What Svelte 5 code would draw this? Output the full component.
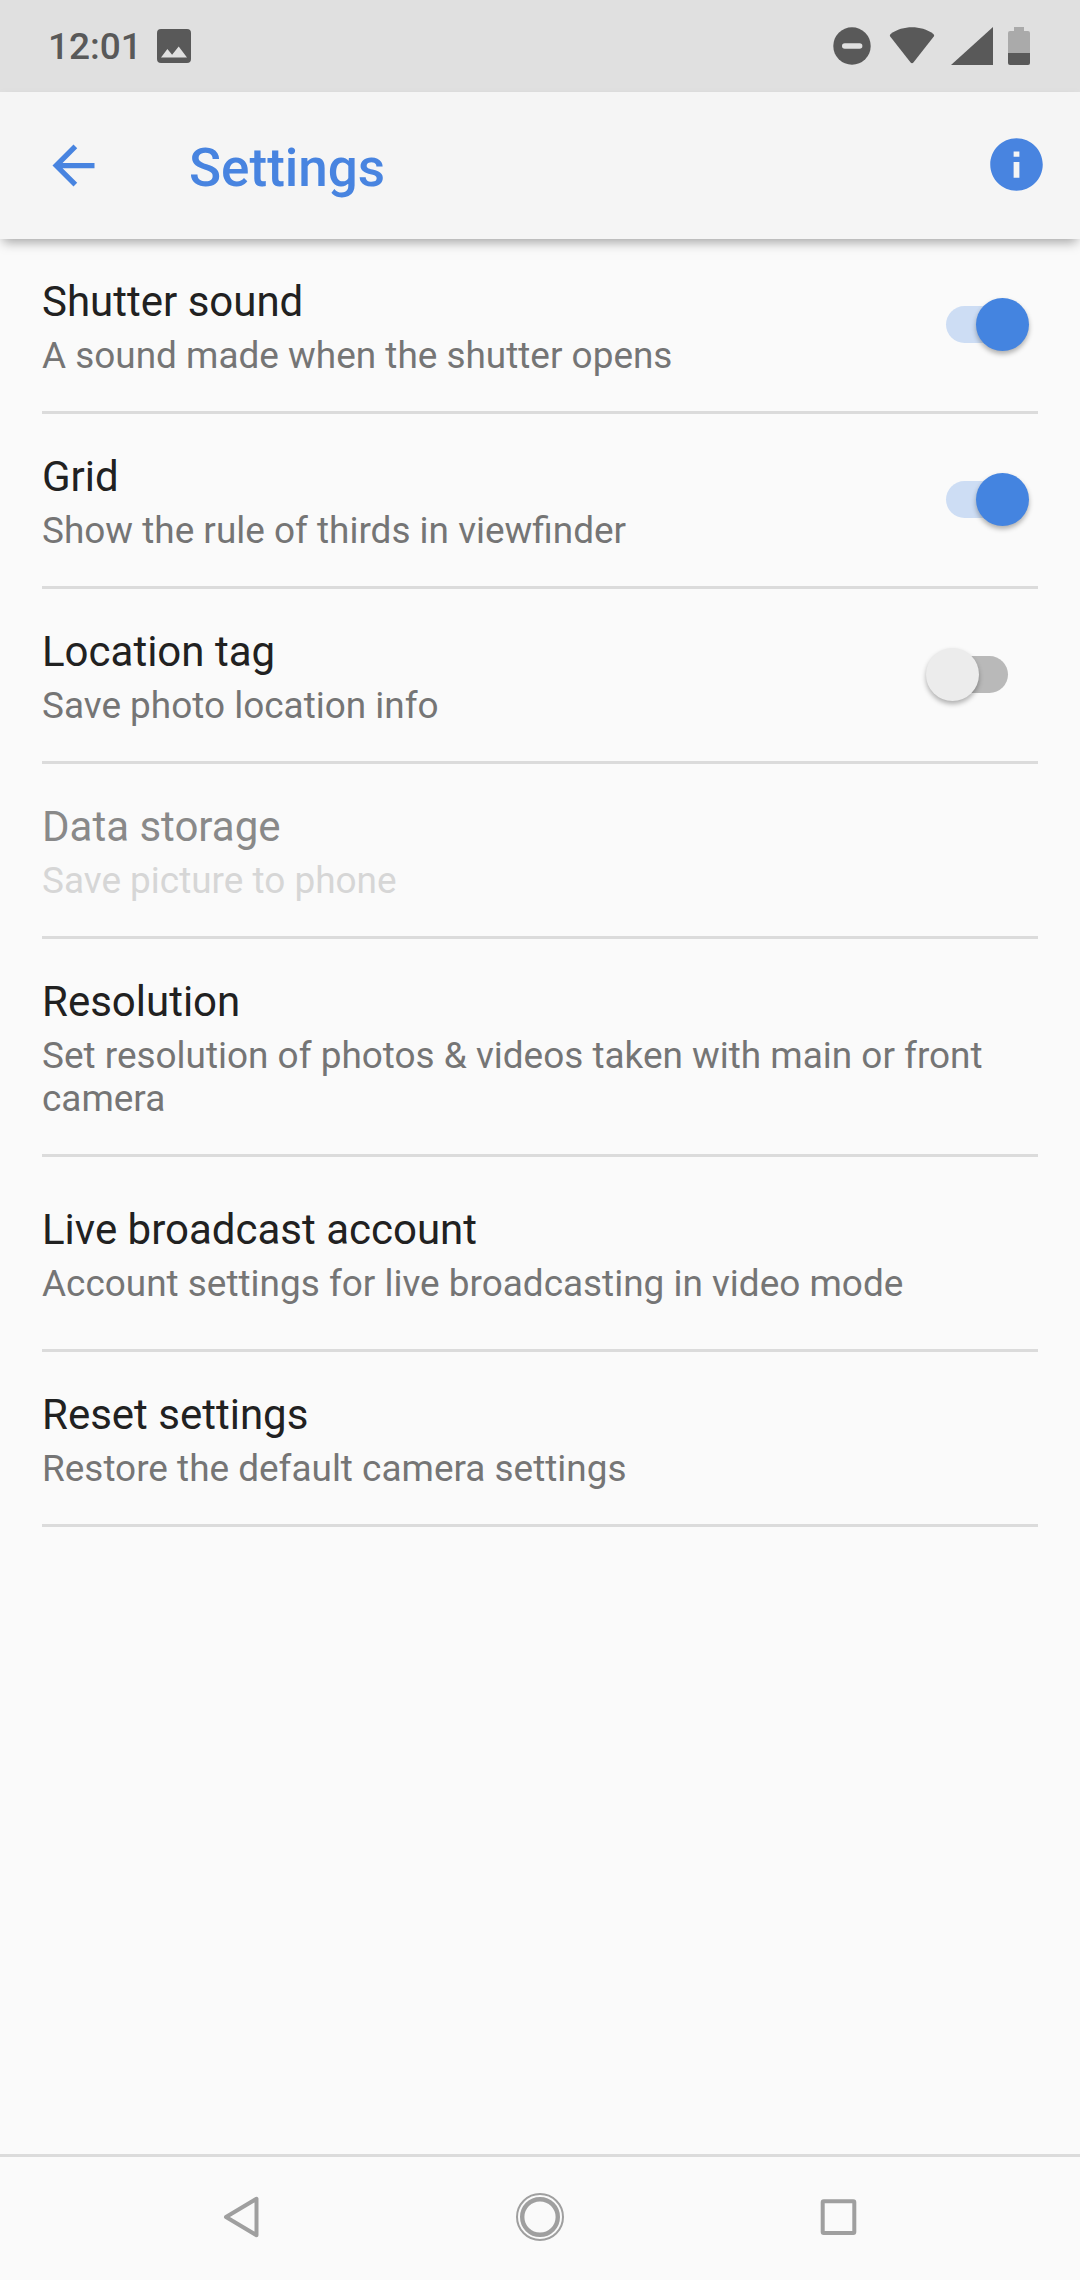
<script lang="ts">
  type Row = {
    id: string;
    title: string;
    summary: string;
    checked?: boolean;
    disabled?: boolean;
    tall?: boolean;
  };

  let rows = $state<Row[]>([
    { id: "shutter", title: "Shutter sound", summary: "A sound made when the shutter opens", checked: true },
    { id: "grid", title: "Grid", summary: "Show the rule of thirds in viewfinder", checked: true },
    { id: "location", title: "Location tag", summary: "Save photo location info", checked: false },
    { id: "storage", title: "Data storage", summary: "Save picture to phone", disabled: true },
    { id: "resolution", title: "Resolution", summary: "Set resolution of photos & videos taken with main or front camera" },
    { id: "live", title: "Live broadcast account", summary: "Account settings for live broadcasting in video mode", tall: true },
    { id: "reset", title: "Reset settings", summary: "Restore the default camera settings" },
  ]);
</script>

<div class="screen">
  <div class="status-bar">
    <span class="clock">12:01</span>
    <svg class="photo" width="34" height="34" viewBox="0 0 34 34">
      <path
        fill-rule="evenodd"
        d="M4 0h26a4 4 0 0 1 4 4v26a4 4 0 0 1-4 4H4a4 4 0 0 1-4-4V4a4 4 0 0 1 4-4zM4 28.5h26L21.7 17.4l-6.6 8.4-4.7-5.7z"
      />
    </svg>
    <svg class="dnd" width="38" height="38" viewBox="0 0 38 38">
      <circle cx="19" cy="19" r="18.7" />
      <rect class="cut" x="9" y="16.2" width="20.4" height="5.6" rx="2.8" />
    </svg>
    <svg class="wifi" width="46" height="38" viewBox="0 0 46 38">
      <path d="M1.2 9.4Q0.2 7.9 1.6 6.9C8 2.4 15.5 0.3 23 0.3S38 2.4 44.4 6.9Q45.8 7.9 44.8 9.4L24.4 35.5Q23 37 21.6 35.5z" />
    </svg>
    <svg class="signal" width="42" height="38" viewBox="0 0 42 38">
      <path d="M0 38h42V0z" />
    </svg>
    <svg class="battery" width="22" height="38" viewBox="0 0 22 38">
      <path class="empty" d="M6 0h10v4h4a2 2 0 0 1 2 2v20H0V6a2 2 0 0 1 2-2h4z" />
      <path d="M0 26h22v10a2 2 0 0 1-2 2H2a2 2 0 0 1-2-2z" />
    </svg>
  </div>

  <header class="app-bar">
    <button class="icon-btn" aria-label="Back">
      <svg width="63" height="63" viewBox="0 0 24 24">
        <path d="M20 11H7.83l5.59-5.59L12 4l-8 8 8 8 1.41-1.41L7.83 13H20v-2z" />
      </svg>
    </button>
    <h1>Settings</h1>
    <button class="icon-btn info" aria-label="Info">
      <svg width="63" height="63" viewBox="0 0 24 24">
        <path
          d="M12 2C6.48 2 2 6.48 2 12s4.48 10 10 10 10-4.48 10-10S17.52 2 12 2zm1.1 15h-2.2v-6h2.2v6zm0-8h-2.2V7h2.2v2z"
        />
      </svg>
    </button>
  </header>

  <main>
    {#each rows as row (row.id)}
      <div class="row" class:tall={row.tall} class:disabled={row.disabled}>
        <div class="text">
          <div class="title">{row.title}</div>
          <div class="summary">{row.summary}</div>
        </div>
        {#if row.checked !== undefined}
          <button
            class="switch"
            class:on={row.checked}
            role="switch"
            aria-checked={row.checked}
            aria-label={row.title}
            onclick={() => (row.checked = !row.checked)}
          >
            <span class="thumb"></span>
          </button>
        {/if}
      </div>
    {/each}
  </main>

  <nav>
    <button aria-label="Back">
      <svg width="50" height="50" viewBox="0 0 50 50">
        <path d="M41.5 6.8v36.4L11 25z" stroke-width="4" stroke-linejoin="round" />
      </svg>
    </button>
    <button aria-label="Home">
      <svg width="50" height="50" viewBox="0 0 50 50">
        <circle cx="25" cy="25" r="23" stroke-width="2" />
        <circle cx="25" cy="25" r="17.8" stroke-width="4.4" />
      </svg>
    </button>
    <button aria-label="Recents">
      <svg width="50" height="50" viewBox="0 0 50 50">
        <rect x="7.7" y="9.3" width="31.6" height="31.6" rx="1" stroke-width="4" />
      </svg>
    </button>
  </nav>
</div>

<style>
  :global(body) {
    margin: 0;
    background: #fafafa;
  }
  .screen {
    display: flex;
    flex-direction: column;
    width: 1080px;
    height: 2280px;
    overflow: hidden;
    background: #fafafa;
    font-family: Roboto, sans-serif;
  }
  button {
    padding: 0;
    border: 0;
    background: none;
  }
  svg {
    display: block;
  }

  .status-bar {
    display: flex;
    flex: none;
    align-items: center;
    box-sizing: border-box;
    height: 92px;
    padding: 0 50px 0 48px;
    background: #e0e0e0;
    color: #595959;
    fill: #595959;
  }
  .clock {
    width: 108.5px;
    padding-top: 2px;
    font-size: 37px;
    font-weight: 500;
    line-height: 44px;
  }
  .photo {
    margin: 0 auto 1px 0;
  }
  .cut {
    fill: #e0e0e0;
  }
  .dnd {
    margin-bottom: 1px;
  }
  .wifi {
    margin-left: 18.5px;
  }
  .signal {
    margin: 0 0 1px 16px;
  }
  .battery {
    margin-left: 15px;
  }
  .empty {
    fill: #aaa;
  }

  .app-bar {
    display: flex;
    flex: none;
    align-items: center;
    box-sizing: border-box;
    height: 147px;
    padding: 0 32px 0 42px;
    background: #f5f5f5;
    color: #4884e0;
    fill: #4884e0;
    box-shadow: 0 6px 11px -3px rgba(0, 0, 0, 0.36);
  }
  .info {
    padding-bottom: 2px;
  }
  h1 {
    flex: 1;
    margin: 0;
    padding: 4px 0 0 84px;
    font-size: 53px;
    font-weight: 500;
    line-height: 62px;
  }

  main {
    flex: 1;
    padding: 0 42px;
  }
  .row {
    display: flex;
    align-items: center;
    padding: 38px 0 34px;
    border-bottom: 3px solid #dbdbdb;
  }
  .row.tall {
    padding: 48px 0 44px;
  }
  .text {
    flex: 1;
  }
  .title {
    padding-bottom: 8px;
    color: #212121;
    font-size: 42px;
    line-height: 49px;
  }
  .summary {
    color: #757575;
    font-size: 36.93px;
    line-height: 43px;
  }
  .disabled .title {
    color: #898989;
  }
  .disabled .summary {
    color: #d6d6d6;
  }

  .switch {
    display: flex;
    align-items: center;
    width: 62px;
    height: 37px;
    margin: -5px 30px 0 0;
    border-radius: 19px;
    background: #b9b9b9;
  }
  .switch.on {
    background: #cdddf4;
  }
  .thumb {
    flex: none;
    width: 53px;
    height: 53px;
    margin-left: -20.5px;
    border-radius: 50%;
    background: #ececec;
    box-shadow: 0 3px 5px rgba(0, 0, 0, 0.3);
  }
  .on .thumb {
    margin-left: 30px;
    background: #4484e0;
  }

  nav {
    display: flex;
    flex: none;
    align-items: center;
    justify-content: space-between;
    box-sizing: border-box;
    height: 126px;
    padding: 0 215px 3px;
    border-top: 3px solid #dbdbdb;
    fill: none;
    stroke: #9f9f9f;
  }
</style>
